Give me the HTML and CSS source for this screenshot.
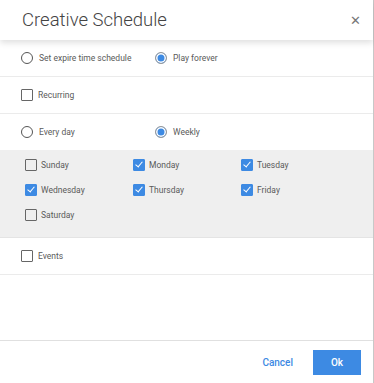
FILE: index.html
```html
<!DOCTYPE html>
<html lang="en">
<head>
  <meta charset="UTF-8">
  <meta name="viewport" content="width=device-width, initial-scale=1.0">
  <title>Creative Schedule</title>
  <link rel="stylesheet" href="styles.css">
</head>
<body>
  <div class="dialog">
    <div class="header">
      <h1 class="title">Creative Schedule</h1>
      <span class="close">&#x2715;</span>
    </div>

    <div class="row">
      <label class="opt wide"><span class="radio"></span>Set expire time schedule</label>
      <label class="opt"><span class="radio on"></span>Play forever</label>
    </div>

    <div class="row">
      <label class="opt"><span class="box"></span>Recurring</label>
    </div>

    <div class="row plain">
      <label class="opt wide"><span class="radio"></span>Every day</label>
      <label class="opt"><span class="radio on"></span>Weekly</label>
    </div>

    <div class="days">
      <label class="opt"><span class="box"></span>Sunday</label>
      <label class="opt"><span class="box on"></span>Monday</label>
      <label class="opt"><span class="box on"></span>Tuesday</label>
      <label class="opt"><span class="box on"></span>Wednesday</label>
      <label class="opt"><span class="box on"></span>Thursday</label>
      <label class="opt"><span class="box on"></span>Friday</label>
      <label class="opt"><span class="box"></span>Saturday</label>
    </div>

    <div class="row">
      <label class="opt"><span class="box"></span>Events</label>
    </div>

    <div class="spacer"></div>

    <div class="footer">
      <button class="btn cancel">Cancel</button>
      <button class="btn ok">Ok</button>
    </div>
  </div>
</body>
</html>
```

FILE: styles.css
```css
body {
  margin: 0;
  font-family: Roboto, 'Liberation Sans', sans-serif;
  background-color: #fff;
}

.dialog {
  width: 373px;
  height: 383px;
  border-right: 1px solid #c8c8c8;
  display: flex;
  flex-direction: column;
  color: #555;
}

.header {
  height: 40px;
  display: flex;
  align-items: center;
  justify-content: space-between;
  padding: 0 10px 0 22px;
  box-shadow: 0 3px 6px rgba(0, 0, 0, 0.12);
  position: relative;
}

.title {
  margin: 0;
  font-size: 18.5px;
  font-weight: 300;
  color: #444;
}

.close {
  font-size: 13px;
  color: #777;
  width: 16px;
  text-align: center;
}

.row {
  height: 36px;
  display: flex;
  align-items: center;
  padding-left: 21px;
  border-bottom: 1px solid #ebebeb;
}

.row.plain {
  border-bottom: none;
}

.opt {
  display: flex;
  align-items: center;
  font-size: 8.5px;
  color: #5a5a5a;
}

.opt.wide {
  width: 134px;
}

.radio {
  width: 10px;
  height: 10px;
  border: 1.5px solid #555;
  border-radius: 50%;
  margin-right: 6px;
  box-sizing: content-box;
}

.radio.on {
  border-color: #999;
  background-color: #3d8ae3;
  box-shadow: inset 0 0 0 1.5px #fff;
}

.box {
  width: 10px;
  height: 10px;
  border: 1.5px solid #666;
  border-radius: 1px;
  margin-right: 5px;
  position: relative;
}

.box.on {
  border-color: #3d8ae3;
  background-color: #3d8ae3;
}

.box.on::after {
  content: '';
  position: absolute;
  left: 3px;
  top: 0px;
  width: 3px;
  height: 6px;
  border: solid #fff;
  border-width: 0 1.1px 1.1px 0;
  transform: rotate(40deg);
}

.days {
  background-color: #efefef;
  display: grid;
  grid-template-columns: 108px 108px 108px;
  grid-auto-rows: 25px;
  padding: 2px 0 10px 25px;
  border-bottom: 1px solid #e4e4e4;
}

.days .box {
  margin-right: 4px;
}

.spacer {
  flex: 1;
  border-bottom: 1px solid #e0e0e0;
}

.footer {
  height: 42px;
  display: flex;
  align-items: center;
  justify-content: flex-end;
  padding-right: 12px;
  gap: 16px;
}

.btn {
  border: none;
  font-family: inherit;
  font-size: 10px;
  font-weight: 500;
  cursor: pointer;
}

.cancel {
  background: none;
  color: #3d8ae3;
  padding: 0 4px;
}

.ok {
  width: 48px;
  height: 25px;
  background-color: #3d8ae3;
  color: #fff;
}
```
